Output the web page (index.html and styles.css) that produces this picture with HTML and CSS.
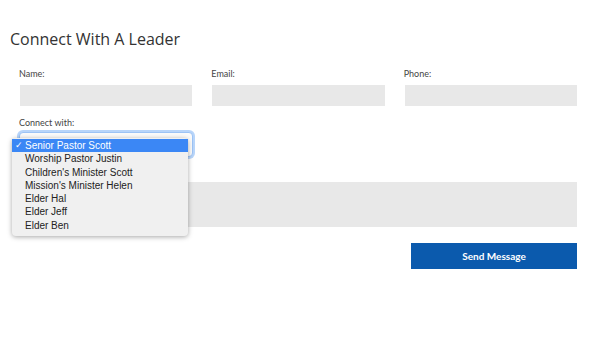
FILE: index.html
```html
<!DOCTYPE html>
<html lang="en">
<head>
    <meta charset="UTF-8">
    <meta name="viewport" content="width=device-width, initial-scale=1.0">
    <title>Connect With A Leader</title>
    <link rel="stylesheet" href="styles.css">
</head>
<body>
    <h1 class="title">Connect With A Leader</h1>

    <form class="contact-form">
        <div class="row">
            <div class="field">
                <label for="name">Name:</label>
                <input type="text" id="name">
            </div>
            <div class="field">
                <label for="email">Email:</label>
                <input type="text" id="email">
            </div>
            <div class="field">
                <label for="phone">Phone:</label>
                <input type="text" id="phone">
            </div>
        </div>

        <div class="row">
            <div class="field">
                <label>Connect with:</label>
                <div class="select-wrap">
                    <div class="select">Senior Pastor Scott</div>
                    <ul class="dropdown">
                        <li class="selected"><span class="check">&#10003;</span>Senior Pastor Scott</li>
                        <li>Worship Pastor Justin</li>
                        <li>Children's Minister Scott</li>
                        <li>Mission's Minister Helen</li>
                        <li>Elder Hal</li>
                        <li>Elder Jeff</li>
                        <li>Elder Ben</li>
                    </ul>
                </div>
            </div>
        </div>

        <textarea class="message"></textarea>

        <div class="actions">
            <button type="button" class="btn">Send Message</button>
        </div>
    </form>
</body>
</html>
```

FILE: styles.css
```css
body {
    margin: 0;
    padding: 0;
    background: #ffffff;
    font-family: 'Lato', 'Liberation Sans', sans-serif;
    color: #333;
}

.title {
    margin: 0;
    padding: 28px 0 0 10px;
    height: 30px;
    font-family: 'Open Sans', sans-serif;
    font-size: 16px;
    font-weight: 400;
    line-height: 22px;
    color: #333;
}

.contact-form {
    width: 557px;
    padding: 10px 0 0 20px;
}

.row {
    display: grid;
    grid-template-columns: repeat(3, 1fr);
    column-gap: 20px;
    margin-bottom: 11px;
}

.field label {
    display: block;
    margin-left: -1px;
    margin-bottom: 5px;
    font-size: 9px;
    line-height: 12px;
    color: #444;
}

.field input {
    display: block;
    box-sizing: border-box;
    width: 100%;
    height: 21px;
    border: none;
    background: #e8e8e8;
}

.select-wrap {
    position: relative;
}

.select {
    box-sizing: border-box;
    width: 174px;
    height: 25px;
    margin-top: -2px;
    margin-left: -1px;
    border: 1px solid #9cc3f5;
    border-radius: 4px;
    box-shadow: 0 0 0 2px #b8d5fa;
    background: #fbfbfb;
    font-family: 'Liberation Sans', sans-serif;
    font-size: 10px;
    line-height: 23px;
    padding-left: 6px;
}

.dropdown {
    position: absolute;
    left: -8px;
    top: 6px;
    width: 176px;
    margin: 0;
    padding: 1px 0 4px;
    list-style: none;
    background: #f0f0f0;
    border-radius: 4px;
    box-shadow: 0 1px 5px rgba(0, 0, 0, 0.35);
    font-family: 'Liberation Sans', sans-serif;
    font-size: 10px;
    color: #222;
}

.dropdown li {
    height: 13.3px;
    line-height: 13.3px;
    padding-left: 13px;
    white-space: nowrap;
}

.dropdown li.selected {
    position: relative;
    background: #3b87f5;
    color: #ffffff;
}

.check {
    position: absolute;
    left: 3px;
    font-size: 9px;
}

.message {
    display: block;
    box-sizing: border-box;
    width: 557px;
    height: 45px;
    margin: 25px 0 16px;
    border: none;
    background: #e8e8e8;
    resize: none;
}

.actions {
    display: flex;
    justify-content: flex-end;
}

.btn {
    width: 166px;
    height: 26px;
    border: none;
    background: #0b5aad;
    color: #ffffff;
    font-family: 'Lato', sans-serif;
    font-size: 10px;
    font-weight: 700;
    cursor: pointer;
}
```
